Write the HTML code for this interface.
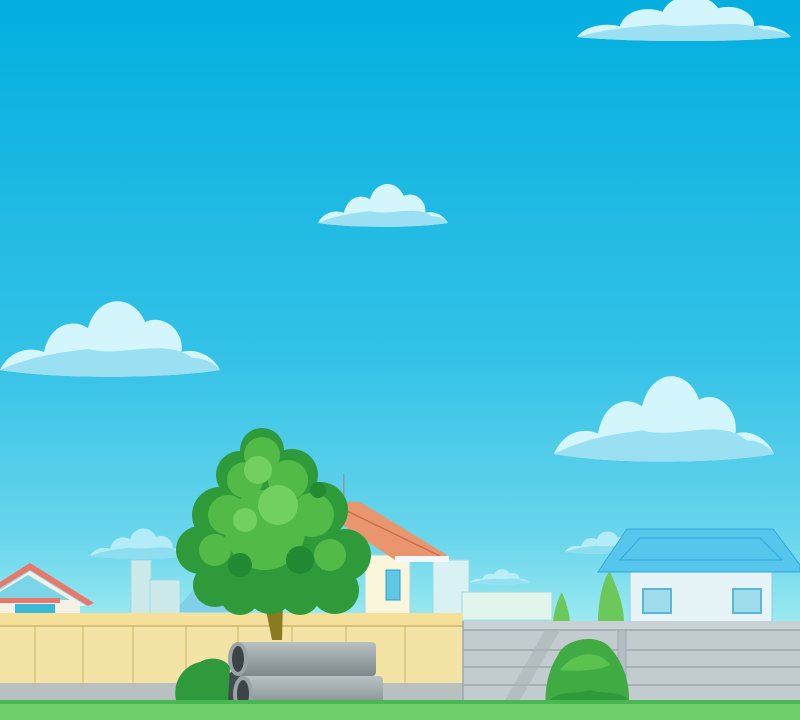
<!DOCTYPE html>
<html><head><meta charset="utf-8"><style>html,body{margin:0;padding:0;width:800px;height:720px;overflow:hidden}svg{display:block}</style></head><body>
<svg width="800" height="720" viewBox="0 0 800 720" xmlns="http://www.w3.org/2000/svg">
<defs>
<linearGradient id="sky" x1="0" y1="0" x2="0" y2="1">
<stop offset="0" stop-color="#02afdf"/><stop offset="0.5" stop-color="#34c2e7"/><stop offset="0.75" stop-color="#6ad6ec"/><stop offset="0.88" stop-color="#a2ecf1"/><stop offset="1" stop-color="#b8f2f2"/>
</linearGradient>
<linearGradient id="pipe" x1="0" y1="0" x2="0" y2="1"><stop offset="0" stop-color="#b9c2c2"/><stop offset="0.5" stop-color="#9aa4a6"/><stop offset="1" stop-color="#7e888a"/></linearGradient>
<g id="cloud"><path d="M0,60 C10,45 30,45 40,48 C45,30 65,25 80,32 C88,10 120,8 132,28 C150,22 168,35 165,48 C180,45 195,52 200,60 C150,66 50,66 0,60Z" fill="#d2f6fc"/><path d="M0,60 C30,50 60,48 80,46 C110,52 150,38 175,52 C185,52 195,55 200,60 C150,66 50,66 0,60Z" fill="#9ae0f2"/></g>
</defs>
<rect width="800" height="720" fill="url(#sky)"/>
<use href="#cloud" transform="translate(577,-17) scale(1.07,0.9)"/>
<use href="#cloud" transform="translate(318,172) scale(0.65,0.85)"/>
<use href="#cloud" transform="translate(0,280) scale(1.1,1.5)"/>
<use href="#cloud" transform="translate(554,352) scale(1.1,1.7)"/>
<use href="#cloud" transform="translate(90,520) scale(0.5,0.6)" opacity="0.7"/>
<use href="#cloud" transform="translate(565,525) scale(0.4,0.45)" opacity="0.7"/>
<use href="#cloud" transform="translate(470,565) scale(0.3,0.3)" opacity="0.7"/>
<rect x="131" y="560" width="20" height="55" fill="#cdeaea" stroke="#9fd8e4"/>
<rect x="150" y="580" width="30" height="35" fill="#cdeaea" stroke="#9fd8e4"/>
<rect x="433" y="560" width="36" height="55" fill="#d8f2f4" stroke="#9fd8e4"/>
<rect x="462" y="592" width="90" height="28" fill="#e2f5ea" stroke="#9fd8e4"/>
<path d="M180,605 L195,588 L230,588 L230,612 L180,612Z" fill="#7fd0e8"/>
<path d="M0,582 L30,563 L94,603 L88,606 L30,570 L0,588Z" fill="#e8786a"/>
<path d="M0,590 L30,571 L86,606 L0,606Z" fill="#f4f2e6"/>
<path d="M0,592 L28,575 L70,600 L0,600Z" fill="#7cd4e8"/>
<rect x="0" y="598" width="60" height="5" fill="#e8786a"/>
<rect x="0" y="603" width="80" height="12" fill="#f4f2e6"/>
<rect x="15" y="604" width="40" height="9" fill="#3ab8d8"/>
<rect x="365" y="555" width="45" height="60" fill="#faf6dc" stroke="#9fd8e4"/>
<rect x="386" y="570" width="14" height="30" fill="#5fc6e4" stroke="#2aa0c8"/>
<path d="M335,502 L360,502 L447,555 L445,560 L395,560 L335,520Z" fill="#e9966e"/>
<path d="M345,510 L440,556" stroke="#c86c50" stroke-width="1.5"/>
<rect x="395" y="556" width="54" height="6" fill="#f4f8fa"/>
<rect x="343" y="474" width="1.5" height="30" fill="#8a9aa0"/>
<rect x="630" y="572" width="142" height="50" fill="#e6f4f8" stroke="#8ccde0"/>
<rect x="643" y="589" width="28" height="24" fill="#9fdcec" stroke="#5ab8d6" stroke-width="2"/>
<rect x="733" y="589" width="28" height="24" fill="#9fdcec" stroke="#5ab8d6" stroke-width="2"/>
<path d="M598,572 L627,529 L773,529 L800,565 L800,572Z" fill="#56c6ec" stroke="#2ea8dc"/>
<path d="M620,560 L640,538 L760,538 L782,560Z" fill="none" stroke="#2ea8dc"/>
<path d="M598,622 C598,600 604,575 610,572 C616,585 624,605 624,622Z" fill="#6cc85a"/>
<path d="M553,622 C555,605 560,595 562,592 C565,600 569,610 570,622Z" fill="#6cc85a"/>
<rect x="0" y="613" width="463" height="14" fill="#f4e098"/>
<rect x="0" y="626" width="463" height="57" fill="#f3e3a4"/>
<g stroke="#d8c47c" stroke-width="1.5"><line x1="35" y1="627" x2="35" y2="683"/><line x1="83" y1="627" x2="83" y2="683"/><line x1="133" y1="627" x2="133" y2="683"/><line x1="186" y1="627" x2="186" y2="683"/><line x1="238" y1="627" x2="238" y2="683"/><line x1="292" y1="627" x2="292" y2="683"/><line x1="346" y1="627" x2="346" y2="683"/><line x1="405" y1="627" x2="405" y2="683"/></g>
<line x1="0" y1="626" x2="463" y2="626" stroke="#d4c07c" stroke-width="2"/>
<rect x="0" y="683" width="463" height="20" fill="#b8c0c0"/>
<rect x="463" y="621" width="337" height="9" fill="#c8d2d4"/>
<rect x="463" y="630" width="337" height="72" fill="#c2cccf"/>
<g stroke="#9ea8ac" stroke-width="1.5"><line x1="463" y1="650" x2="800" y2="650"/><line x1="463" y1="667" x2="800" y2="667"/><line x1="463" y1="685" x2="800" y2="685"/><line x1="463" y1="630" x2="800" y2="630"/><line x1="463" y1="621" x2="463" y2="702"/></g>
<rect x="618" y="630" width="8" height="72" fill="#b4bec2" stroke="#9ea8ac"/>
<path d="M545,630 L560,630 L520,700 L505,700Z" fill="#aab4b8" opacity="0.6"/>
<!-- tree -->
<path d="M262,590 L272,640 L282,640 L283,600 L300,590 L285,585 L278,598 L270,585Z" fill="#8a7a20"/>
<g fill="#2e9a3a">
<circle cx="262" cy="450" r="22"/><circle cx="240" cy="475" r="24"/><circle cx="292" cy="475" r="26"/><circle cx="220" cy="515" r="28"/><circle cx="320" cy="510" r="28"/><circle cx="200" cy="550" r="24"/><circle cx="345" cy="555" r="26"/><circle cx="215" cy="585" r="22"/><circle cx="335" cy="590" r="24"/><circle cx="270" cy="540" r="60"/><circle cx="270" cy="590" r="24"/><circle cx="240" cy="595" r="20"/><circle cx="300" cy="595" r="20"/>
</g>
<g fill="#52bb48">
<circle cx="262" cy="455" r="18"/><circle cx="245" cy="480" r="18"/><circle cx="288" cy="480" r="20"/><circle cx="228" cy="515" r="20"/><circle cx="312" cy="515" r="22"/><circle cx="265" cy="530" r="40"/><circle cx="330" cy="555" r="16"/><circle cx="215" cy="550" r="16"/>
</g>
<g fill="#72d060"><circle cx="258" cy="470" r="14"/><circle cx="278" cy="505" r="20"/><circle cx="245" cy="520" r="12"/></g>
<g fill="#228a32"><circle cx="300" cy="560" r="14"/><circle cx="240" cy="565" r="12"/><circle cx="318" cy="490" r="8"/></g>
<ellipse cx="238" cy="690" rx="16" ry="20" fill="#444c50"/>
<rect x="238" y="676" width="145" height="36" rx="4" fill="url(#pipe)"/>
<ellipse cx="243" cy="694" rx="10" ry="18" fill="#9aa4a6"/>
<ellipse cx="243" cy="694" rx="6" ry="14" fill="#3c4448"/>
<rect x="236" y="642" width="140" height="34" rx="4" fill="url(#pipe)"/>
<ellipse cx="238" cy="659" rx="10" ry="17" fill="#9aa4a6"/>
<ellipse cx="238" cy="659" rx="6" ry="13" fill="#3c4448"/>
<path d="M176,700 C172,680 185,665 200,662 C212,655 228,660 230,668 L228,702Z" fill="#2f9a3c"/>
<path d="M546,710 C544,690 548,670 558,655 C565,638 600,632 612,650 C625,665 632,690 628,712Z" fill="#3fab42"/>
<path d="M560,670 C575,650 600,650 610,665 C600,670 580,672 560,670Z" fill="#5cc24e"/>
<path d="M550,700 C560,690 575,695 590,690 C605,695 620,690 628,700 L628,712 L546,712Z" fill="#2e9a3a"/>
<rect x="0" y="700" width="800" height="20" fill="#6fd06a"/>
<path d="M0,700 L800,700 L800,704 L0,704Z" fill="#4ab852"/>
</svg>
</body></html>
